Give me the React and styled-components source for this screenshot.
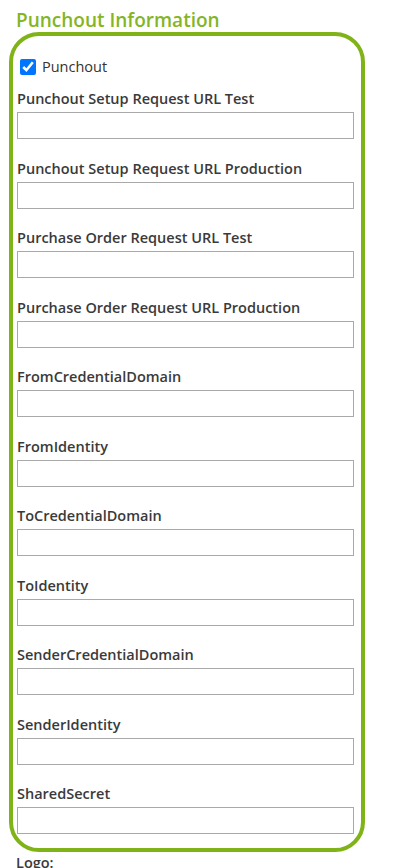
import React from "react";
import styled, { createGlobalStyle } from "styled-components";

const Global = createGlobalStyle`
  html, body { margin: 0; padding: 0; background: #fff; }
  body { font-family: "Open Sans", "Liberation Sans", sans-serif; color: #333; }
  * { box-sizing: border-box; }
`;

const Page = styled.div`
  padding: 0 0 0 9px;
  width: 397px;
`;

const Heading = styled.h3`
  margin: 0 0 0 7px;
  padding-top: 8px;
  font-size: 19px;
  line-height: 24px;
  font-weight: 600;
  color: #84b525;
`;

const Box = styled.div`
  width: 356px;
  border: 4px solid #80b318;
  border-radius: 30px;
  padding: 21px 7px 14px 4px;
`;

const CheckRow = styled.label`
  display: flex;
  align-items: center;
  gap: 6px;
  height: 20px;
  margin: 0 0 12px 0;
  font-size: 14.5px;
  color: #333;
  line-height: 20px;
  padding-left: 3px;
`;

const Check = styled.input`
  width: 16px;
  height: 16px;
  margin: 0;
  accent-color: #0075ff;
`;

const Group = styled.div`
  margin-bottom: ${(p) => (p.$last ? "0" : "19.5px")};
`;

const Label = styled.label`
  display: block;
  font-size: 14.5px;
  line-height: 20px;
  font-weight: 600;
  color: #3a3a3a;
  margin-bottom: 3px;
`;

const Input = styled.input`
  display: block;
  width: 337px;
  height: 27px;
  border: 1px solid #a9a9a9;
  background: #fff;
  margin: 0;
  padding: 2px 4px;
  font-family: inherit;
  font-size: 14px;
`;

const Logo = styled.div`
  margin: 1px 0 0 7px;
  font-size: 14.5px;
  line-height: 20px;
  font-weight: 600;
  color: #3a3a3a;
`;

const fields = [
  "Punchout Setup Request URL Test",
  "Punchout Setup Request URL Production",
  "Purchase Order Request URL Test",
  "Purchase Order Request URL Production",
  "FromCredentialDomain",
  "FromIdentity",
  "ToCredentialDomain",
  "ToIdentity",
  "SenderCredentialDomain",
  "SenderIdentity",
  "SharedSecret",
];

export default function App() {
  return (
    <Page>
      <Global />
      <Heading>Punchout Information</Heading>
      <Box>
        <CheckRow>
          <Check type="checkbox" defaultChecked />
          Punchout
        </CheckRow>
        {fields.map((f, i) => (
          <Group key={f} $last={i === fields.length - 1}>
            <Label>{f}</Label>
            <Input type="text" />
          </Group>
        ))}
      </Box>
      <Logo>Logo:</Logo>
    </Page>
  );
}
